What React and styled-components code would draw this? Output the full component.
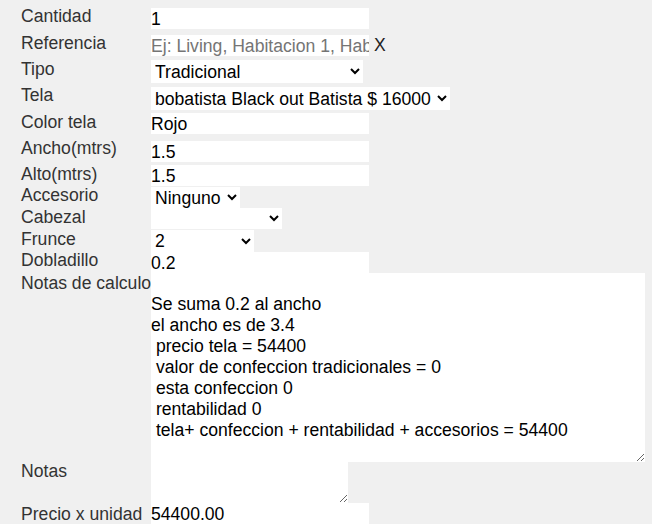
import styled, { createGlobalStyle } from 'styled-components'

const GlobalStyle = createGlobalStyle`
body {
  margin: 0;
  background: #f0f0f0;
  font-family: "Liberation Sans", Arial, sans-serif;
  font-size: 17.6px;
}
`

const Form = styled.div`
display: flex;
flex-direction: column;
padding: 8px 0 0 21px;
`
const Row = styled.div`
display: flex;
align-items: flex-start;
height: ${p => p.$h}px;
`
const Label = styled.label`
flex: none;
width: 130px;
margin-top: ${p => p.$top || 0}px;
line-height: 18px;
color: #333;
white-space: nowrap;
`
const Field = styled.div`
display: flex;
align-items: center;
`
const TextInput = styled.input`
box-sizing: border-box;
width: ${p => p.$w || 218}px;
height: 21px;
padding: 1px 0 0;
border: none;
outline: none;
background: #fff;
color: #000;
font: inherit;
&::placeholder {
  color: #757575;
}
`
const ClearMark = styled.span`
margin-left: 5px;
color: #222;
line-height: 21px;
`
const Select = styled.select`
box-sizing: border-box;
width: ${p => p.$w}px;
height: ${p => p.$h || 21}px;
border: none;
outline: none;
border-radius: 0;
background: #fff;
color: #000;
font: inherit;
`
const NoteArea = styled.textarea`
box-sizing: border-box;
width: ${p => p.$w}px;
height: ${p => p.$h}px;
padding: 0;
border: none;
outline: none;
background: #fff;
color: #000;
font: inherit;
line-height: 21px;
`

const calcNotes = `
Se suma 0.2 al ancho
el ancho es de 3.4
 precio tela = 54400
 valor de confeccion tradicionales = 0
 esta confeccion 0
 rentabilidad 0
 tela+ confeccion + rentabilidad + accesorios = 54400`

const App = () => {
    return (
        <>
            <GlobalStyle />
            <Form>
                <Row $h={27}>
                    <Label $top={-1.5}>Cantidad</Label>
                    <TextInput defaultValue="1" />
                </Row>
                <Row $h={25}>
                    <Label $top={-1.5}>Referencia</Label>
                    <Field>
                        <TextInput placeholder="Ej: Living, Habitacion 1, Habitacion 2" />
                        <ClearMark>X</ClearMark>
                    </Field>
                </Row>
                <Row $h={27}>
                    <Label $top={0}>Tipo</Label>
                    <Select $w={212} $h={23} defaultValue="tradicional">
                        <option value="tradicional">Tradicional</option>
                        <option value="roller">Roller</option>
                    </Select>
                </Row>
                <Row $h={26}>
                    <Label $top={-1.5}>Tela</Label>
                    <Select $w={299} $h={23} defaultValue="bobatista">
                        <option value="bobatista">bobatista Black out Batista $ 16000</option>
                    </Select>
                </Row>
                <Row $h={28}>
                    <Label $top={-0.5}>Color tela</Label>
                    <TextInput defaultValue="Rojo" />
                </Row>
                <Row $h={24}>
                    <Label $top={-2.5}>Ancho(mtrs)</Label>
                    <TextInput defaultValue="1.5" />
                </Row>
                <Row $h={22}>
                    <Label $top={-0.5}>Alto(mtrs)</Label>
                    <TextInput defaultValue="1.5" />
                </Row>
                <Row $h={21}>
                    <Label $top={-1}>Accesorio</Label>
                    <Select $w={89} defaultValue="ninguno">
                        <option value="ninguno">Ninguno</option>
                    </Select>
                </Row>
                <Row $h={22}>
                    <Label $top={-0.5}>Cabezal</Label>
                    <Select $w={131} defaultValue="">
                        <option value=""></option>
                    </Select>
                </Row>
                <Row $h={22}>
                    <Label $top={-0.5}>Frunce</Label>
                    <Select $w={103} $h={22} defaultValue="2">
                        <option value="2">2</option>
                        <option value="3">3</option>
                    </Select>
                </Row>
                <Row $h={21}>
                    <Label $top={-1}>Dobladillo</Label>
                    <TextInput defaultValue="0.2" />
                </Row>
                <Row $h={189}>
                    <Label $top={1}>Notas de calculo</Label>
                    <NoteArea $w={494} $h={189} defaultValue={calcNotes} />
                </Row>
                <Row $h={41}>
                    <Label $top={0}>Notas</Label>
                    <NoteArea $w={197} $h={41} />
                </Row>
                <Row $h={21}>
                    <Label $top={1.5}>Precio x unidad</Label>
                    <TextInput defaultValue="54400.00" />
                </Row>
            </Form>
        </>
    )
}

export default App
